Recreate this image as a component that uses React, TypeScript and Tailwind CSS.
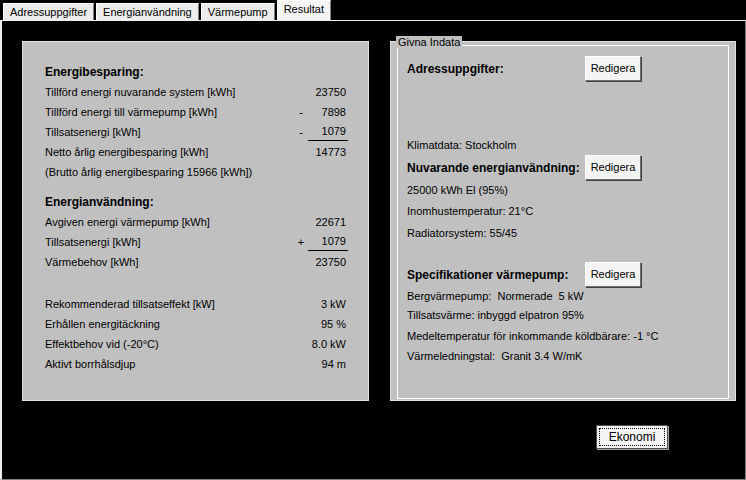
const font = { fontFamily: '"Liberation Sans", Arial, sans-serif' };

function Btn({ label }: { label: string }) {
  return (
    <div className="h-[25px] w-[56px] shrink-0 flex items-center justify-center bg-[#f4f4f4] border border-t-white border-l-white border-r-[#707070] border-b-[#707070] shadow-[1px_1px_0_#404040] text-[11px] text-black">
      {label}
    </div>
  );
}

function Row({ label, sign, value, line }: { label: string; sign?: string; value?: string; line?: boolean }) {
  return (
    <div className="h-[20px] flex items-center whitespace-nowrap">
      <span className="flex-1">{label}</span>
      <span className="w-[14px] text-center">{sign}</span>
      <span className={`w-[40px] text-right pr-[2px] ${line ? "border-b border-black leading-[17px]" : ""}`}>{value}</span>
    </div>
  );
}

function Tab({ label, active }: { label: string; active?: boolean }) {
  return (
    <div
      className={`px-[6px] flex items-center text-[11px] text-black border border-b-0 border-t-white border-l-white border-r-[#808080] ${
        active ? "h-[20px] bg-[#f4f4f4] -mb-[1px] z-10 pb-[3px]" : "h-[17px] bg-[#ececec] mt-[3px]"
      }`}
    >
      {label}
    </div>
  );
}

export default function App() {
  return (
    <div className="w-[746px] h-[480px] bg-black text-[11px] text-black flex flex-col" style={font}>
      <div className="h-[20px] flex pl-[3px] gap-[2px] bg-black">
        <Tab label="Adressuppgifter" />
        <Tab label="Energianvändning" />
        <Tab label="Värmepump" />
        <Tab label="Resultat" active />
      </div>
      <div className="flex-1 border-t border-l-[2px] border-[#f0f0f0] border-r border-r-[#808080] border-b border-b-[#808080] flex flex-col">
        <div className="flex pl-[20px] pt-[20px] gap-[21px]">
          <div className="w-[347px] h-[360px] bg-[#c0c0c0] border border-[#e0e0e0] pl-[22px] pr-[20px] pt-[20px]">
            <div className="h-[20px] flex items-center font-bold text-[12px]">Energibesparing:</div>
            <Row label="Tillförd energi nuvarande system [kWh]" value="23750" />
            <Row label="Tillförd energi till värmepump [kWh]" sign="-" value="7898" />
            <Row label="Tillsatsenergi [kWh]" sign="-" value="1079" line />
            <Row label="Netto årlig energibesparing [kWh]" value="14773" />
            <Row label="(Brutto årlig energibesparing 15966 [kWh])" />
            <div className="h-[10px]" />
            <div className="h-[20px] flex items-center font-bold text-[12px]">Energianvändning:</div>
            <Row label="Avgiven energi värmepump [kWh]" value="22671" />
            <Row label="Tillsatsenergi [kWh]" sign="+" value="1079" line />
            <Row label="Värmebehov [kWh]" value="23750" />
            <div className="h-[22px]" />
            <Row label="Rekommenderad tillsatseffekt [kW]" value="3 kW" />
            <Row label="Erhållen energitäckning" value="95 %" />
            <Row label="Effektbehov vid (-20°C)" value="8.0 kW" />
            <Row label="Aktivt borrhålsdjup" value="94 m" />
          </div>
          <div className="w-[346px] h-[360px] bg-[#c0c0c0] relative border border-[#e0e0e0] pt-[3px] px-[6px]">
            <div className="absolute -top-[6px] left-[5px] bg-[#c0c0c0] px-[2px] leading-[12px]">Givna Indata</div>
            <div className="h-[354px] border border-white pl-[9px] pt-[10px] whitespace-nowrap">
              <div className="flex items-center h-[25px]">
                <span className="w-[178px] font-bold text-[12px]">Adressuppgifter:</span>
                <Btn label="Redigera" />
              </div>
              <div className="h-[54px]" />
              <div className="h-[20px] flex items-center">Klimatdata: Stockholm</div>
              <div className="flex items-center h-[25px]">
                <span className="w-[178px] font-bold text-[12px]">Nuvarande energianvändning:</span>
                <Btn label="Redigera" />
              </div>
              <div className="h-[20px] flex items-center">25000 kWh El (95%)</div>
              <div className="h-[22px] flex items-center">Inomhustemperatur: 21°C</div>
              <div className="h-[22px] flex items-center">Radiatorsystem: 55/45</div>
              <div className="h-[18px]" />
              <div className="flex items-center h-[25px]">
                <span className="w-[178px] font-bold text-[12px]">Specifikationer värmepump:</span>
                <Btn label="Redigera" />
              </div>
              <div className="h-[18px] flex items-center">Bergvärmepump:&nbsp; Normerade&nbsp; 5 kW</div>
              <div className="h-[21px] flex items-center">Tillsatsvärme: inbyggd elpatron 95%</div>
              <div className="h-[20px] flex items-center">Medeltemperatur för inkommande köldbärare: -1 °C</div>
              <div className="h-[20px] flex items-center">Värmeledningstal:&nbsp; Granit 3.4 W/mK</div>
            </div>
          </div>
        </div>
        <div className="flex pl-[594px] pt-[24px]">
          <div className="h-[24px] w-[72px] bg-[#f4f4f4] border border-[#505050] shadow-[1px_1px_0_#a0a0a0] p-[2px]">
            <div className="h-full border border-dotted border-black flex items-center justify-center text-[12px]">Ekonomi</div>
          </div>
        </div>
      </div>
    </div>
  );
}
